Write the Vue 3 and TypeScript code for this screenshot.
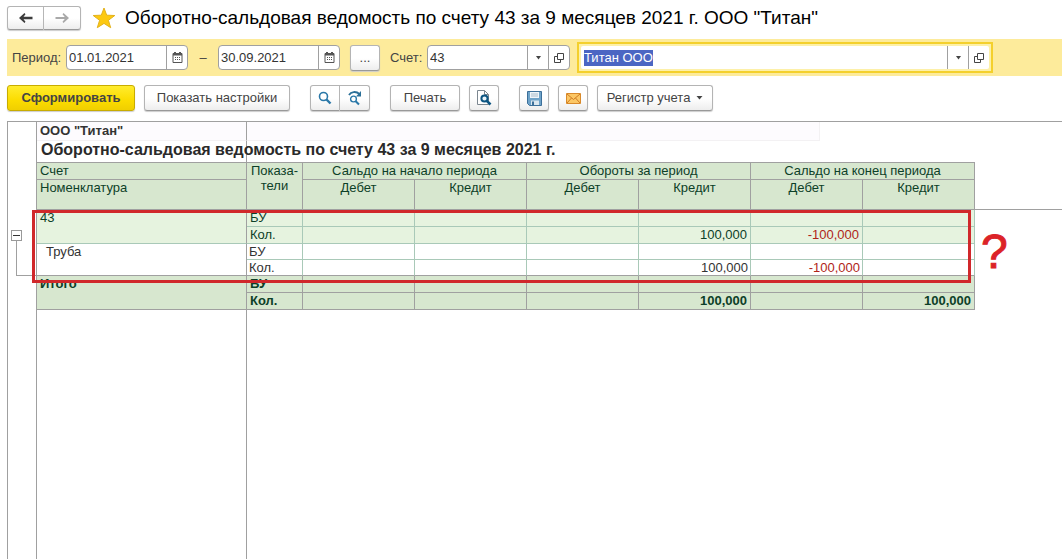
<script setup lang="ts">
import { onMounted, ref } from 'vue'

interface Line {
  kind: string
  name?: string
  indicator: string
  values: string[]
}

const dateFrom = ref('01.01.2021')
const dateTo = ref('30.09.2021')
const account = ref('43')
const company = ref('Титан ООО')
const companyInput = ref<HTMLInputElement | null>(null)

const groups = ['Сальдо на начало периода', 'Обороты за период', 'Сальдо на конец периода']
const sides = ['Дебет', 'Кредит', 'Дебет', 'Кредит', 'Дебет', 'Кредит']

const lines: Line[] = [
  { kind: 'account', name: '43', indicator: 'БУ', values: ['', '', '', '', '', ''] },
  { kind: 'account', indicator: 'Кол.', values: ['', '', '', '100,000', '-100,000', ''] },
  { kind: 'item', name: 'Труба', indicator: 'БУ', values: ['', '', '', '', '', ''] },
  { kind: 'item', indicator: 'Кол.', values: ['', '', '', '100,000', '-100,000', ''] },
  { kind: 'total', name: 'Итого', indicator: 'БУ', values: ['', '', '', '', '', ''] },
  { kind: 'total', indicator: 'Кол.', values: ['', '', '', '100,000', '', '100,000'] },
]

onMounted(() => {
  companyInput.value?.focus()
  companyInput.value?.select()
})
</script>

<template>
  <main class="page">
    <header class="head">
      <div class="group nav">
        <button class="btn" type="button" aria-label="Назад">
          <svg width="16" height="12" viewBox="0 0 16 12"><path d="M1 6 6.500 1 7.500 2.200 5.500 4.700H14.500V7.300H5.500L7.500 9.800 6.500 11Z" fill="#3c3c3c" /></svg>
        </button>
        <button class="btn" type="button" aria-label="Вперед">
          <svg width="16" height="12" viewBox="0 0 16 12"><path d="M15 6 9.500 1 8.500 2.200 10.800 5H1.500V7H10.800L8.500 9.800 9.500 11Z" fill="#a9a9a9" /></svg>
        </button>
      </div>
      <svg class="star" width="24" height="22" viewBox="0 0 24 22"><path d="M12 1 14.700 8.200 22.800 8.500 16.400 13.300 18.700 20.700 12 16.400 5.300 20.700 7.600 13.300 1.200 8.500 9.300 8.200Z" fill="#fdc911" stroke="#e3b21c" stroke-width="1" /></svg>
      <h1>Оборотно-сальдовая ведомость по счету 43 за 9 месяцев 2021 г. ООО "Титан"</h1>
    </header>

    <form class="filters" @submit.prevent>
      <label class="lbl-period" for="from">Период:</label>
      <div class="field date">
        <input id="from" v-model="dateFrom" type="text" />
        <button type="button" aria-label="Выбрать дату начала">
          <svg width="11" height="11" viewBox="0 0 11 11"><path d="M1 1.500H10V10.500H1Z" fill="#fff" stroke="#555" /><path d="M1 2.500H10M3 0V2M8 0V2" stroke="#555" stroke-width="2" /><path d="M3 5.500H9M3 7.500H9" stroke="#555" stroke-dasharray="1 1" /></svg>
        </button>
      </div>
      <span class="dash">–</span>
      <div class="field date">
        <input v-model="dateTo" type="text" aria-label="Конец периода" />
        <button type="button" aria-label="Выбрать дату окончания">
          <svg width="11" height="11" viewBox="0 0 11 11"><path d="M1 1.500H10V10.500H1Z" fill="#fff" stroke="#555" /><path d="M1 2.500H10M3 0V2M8 0V2" stroke="#555" stroke-width="2" /><path d="M3 5.500H9M3 7.500H9" stroke="#555" stroke-dasharray="1 1" /></svg>
        </button>
      </div>
      <button class="btn more" type="button">...</button>
      <label class="lbl-account" for="account">Счет:</label>
      <div class="field acc">
        <input id="account" v-model="account" type="text" />
        <button type="button" aria-label="Список счетов"><svg width="7" height="4" viewBox="0 0 7 4"><path d="M1 0H6L3.500 3.500Z" fill="#444" /></svg></button>
        <button type="button" aria-label="Открыть счет"><svg width="10" height="10" viewBox="0 0 10 10"><path d="M3.500 .5H9.500V6.500H3.500ZM3 3.500H.5V9.500H6.500V7" fill="none" stroke="#444" /></svg></button>
      </div>
      <div class="focus">
        <div class="field company">
          <input ref="companyInput" v-model="company" type="text" aria-label="Организация" />
          <button type="button" aria-label="Список организаций"><svg width="7" height="4" viewBox="0 0 7 4"><path d="M1 0H6L3.500 3.500Z" fill="#444" /></svg></button>
          <button type="button" aria-label="Открыть организацию"><svg width="10" height="10" viewBox="0 0 10 10"><path d="M3.500 .5H9.500V6.500H3.500ZM3 3.500H.5V9.500H6.500V7" fill="none" stroke="#444" /></svg></button>
        </div>
      </div>
    </form>

    <div class="tools">
      <button class="btn primary" type="button">Сформировать</button>
      <button class="btn settings" type="button">Показать настройки</button>
      <div class="group search">
        <button class="btn" type="button" aria-label="Найти">
          <svg width="14" height="14" viewBox="0 0 14 14"><circle cx="5.500" cy="5.500" r="4" fill="#fff" stroke="#2a78a8" stroke-width="1.600" /><path d="M8.500 8.500 12.500 12.500" stroke="#2a78a8" stroke-width="2.400" /></svg>
        </button>
        <button class="btn" type="button" aria-label="Найти далее">
          <svg width="16" height="16" viewBox="0 0 16 16"><path d="M2 5C4 1.500 9 1 12.500 4" fill="none" stroke="#2a6f98" stroke-width="1.800" /><path d="M14 1V6.500H9Z" fill="#2a6f98" /><circle cx="6.500" cy="9" r="2.900" fill="#fff" stroke="#2a78a8" stroke-width="1.400" /><path d="M8.700 11.200 12 14.500" stroke="#2a78a8" stroke-width="2" /></svg>
        </button>
      </div>
      <button class="btn print" type="button">Печать</button>
      <button class="btn icon preview" type="button" aria-label="Просмотр">
        <svg width="16" height="16" viewBox="0 0 16 16"><path d="M1.500 .5H8.500L12.500 4.500V14.500H1.500ZM8.500 .5V4.500H12.500" fill="#fff" stroke="#7c8790" /><circle cx="8.500" cy="8.500" r="3.100" fill="#e8f4fa" stroke="#0c5582" stroke-width="2" /><path d="M10.800 10.800 14.500 14.500" stroke="#0c5582" stroke-width="2.600" /></svg>
      </button>
      <button class="btn icon save" type="button" aria-label="Сохранить">
        <svg width="15" height="15" viewBox="0 0 15 15"><path d="M.5 .5H14.500V14.500H2.500L.5 12.500Z" fill="#6ea3c9" stroke="#3c6f99" /><path d="M3 1H12V7H3Z" fill="#eef5fa" /><path d="M4 3H11M4 5H11" stroke="#a9bccb" /><path d="M4 9.500H12V14H4Z" fill="#dbe7ef" /><path d="M5 10.500H7V14H5Z" fill="#3c6f99" /></svg>
      </button>
      <button class="btn icon" type="button" aria-label="Отправить по почте">
        <svg width="15" height="11" viewBox="0 0 15 11"><path d="M.5 .5H14.500V10.500H.5Z" fill="#fcc765" stroke="#d98a2b" /><path d="M1 1 7.500 6.500 14 1M1 10 5.500 5M14 10 9.500 5" fill="none" stroke="#cf7c24" /></svg>
      </button>
      <button class="btn register" type="button">Регистр учета <svg width="7" height="4" viewBox="0 0 7 4"><path d="M.5 0H6.500L3.500 3.500Z" fill="#444" /></svg></button>
    </div>

    <section class="sheet">
      <table>
        <colgroup>
          <col class="c-gutter" />
          <col class="c-name" />
          <col class="c-ind" />
          <col v-for="(s, i) in sides" :key="i" class="c-num" />
          <col />
        </colgroup>
        <tbody>
          <tr class="r-company">
            <td class="gutter"></td>
            <td class="name tint"><strong>ООО "Титан"</strong></td>
            <td class="free" colspan="8"><div class="strip"></div></td>
          </tr>
          <tr class="r-title">
            <td class="gutter"></td>
            <td class="name"><h2>Оборотно-сальдовая ведомость по счету 43 за 9 месяцев 2021 г.</h2></td>
            <td class="free under" colspan="7"></td>
            <td class="free"></td>
          </tr>
          <tr class="r-head">
            <td class="gutter"></td>
            <th class="name">Счет</th>
            <th rowspan="2">Показа-<br />тели</th>
            <th v-for="g in groups" :key="g" colspan="2">{{ g }}</th>
            <td class="free"></td>
          </tr>
          <tr class="r-sub">
            <td class="gutter under"></td>
            <th class="name">Номенклатура</th>
            <th v-for="(s, i) in sides" :key="i">{{ s }}</th>
            <td class="free under"></td>
          </tr>
          <tr v-for="(line, i) in lines" :key="i" :class="line.kind">
            <td v-if="i === 0" class="gutter tree" rowspan="4">
              <button type="button" aria-label="Свернуть группу"></button>
              <div class="branch"></div>
            </td>
            <td v-if="i > 3" class="gutter"></td>
            <td v-if="line.name" class="name" rowspan="2">{{ line.name }}</td>
            <td class="ind">{{ line.indicator }}</td>
            <td v-for="(v, k) in line.values" :key="k" class="num" :class="{ neg: v.startsWith('-') }">{{ v }}</td>
            <td class="free"></td>
          </tr>
        </tbody>
      </table>
      <div class="rest"><div></div><div></div></div>
      <div class="mark"></div>
      <div class="question">?</div>
    </section>
  </main>
</template>

<style>
body {
  margin: 0;
  background: #fff;
}
</style>

<style scoped>
.page {
  box-sizing: border-box;
  min-height: 100vh;
  padding-left: 7px;
  display: flex;
  flex-direction: column;
  overflow: hidden;
  font: 13px/16px "Liberation Sans", Arial, sans-serif;
  color: #444;
}
button,
input {
  box-sizing: border-box;
  font: inherit;
  color: inherit;
}
.head {
  display: flex;
  align-items: center;
  padding: 5px 0 9px;
}
h1 {
  margin: 0 0 0 9px;
  font-size: 19px;
  line-height: 25px;
  font-weight: 400;
  color: #000;
  white-space: nowrap;
}
.star {
  margin-left: 11px;
}
.btn {
  display: flex;
  align-items: center;
  justify-content: center;
  height: 26px;
  padding: 0;
  border: 1px solid #b4b4b4;
  border-bottom-color: #999;
  border-radius: 3px;
  background: linear-gradient(#fff 50%, #ededed);
  box-shadow: 0 1px 1px #ccc;
  white-space: nowrap;
}
.group {
  display: flex;
}
.group .btn:first-child {
  border-radius: 3px 0 0 3px;
}
.group .btn:last-child {
  border-left: 0;
  border-radius: 0 3px 3px 0;
}
.nav .btn {
  width: 37px;
  height: 24px;
}
.filters {
  display: flex;
  align-items: center;
  height: 37px;
  padding-left: 5px;
  background: #fdeb9b;
}
.lbl-period {
  width: 54px;
}
.lbl-account {
  width: 37px;
  margin-left: 10px;
}
.field {
  box-sizing: border-box;
  display: flex;
  height: 25px;
  border: 1px solid #a0a0a0;
  border-radius: 4px;
  background: #fff;
  overflow: hidden;
}
.field input {
  flex: 1;
  min-width: 0;
  padding: 0 2px;
  border: 0;
  outline: 0;
  background: none;
  color: #333;
}
.field input::selection {
  background: #4b66c3;
  color: #fff;
}
.field button {
  display: flex;
  align-items: center;
  justify-content: center;
  width: 21px;
  padding: 0;
  border: 0;
  border-left: 1px solid #a0a0a0;
  background: none;
}
.date {
  width: 122px;
}
.dash {
  width: 30px;
  text-align: center;
}
.more {
  width: 30px;
  margin-left: 10px;
}
.acc {
  width: 143px;
}
.focus {
  box-sizing: border-box;
  flex: 0 1 416px;
  margin-left: 7px;
  border: 2px solid #f4d02c;
  padding: 2px;
  background: #fdf0a8;
}
.company {
  border: 0;
  border-radius: 2px;
  height: 23px;
  padding-left: 1px;
}
.tools {
  display: flex;
  align-items: center;
  padding: 9px 0 10px;
}
.primary {
  width: 128px;
  border-color: #c8ac00;
  background: linear-gradient(#ffec2e, #fbdc00 60%, #f0cf00);
  font-weight: 700;
}
.settings {
  width: 146px;
  margin-left: 9px;
}
.search {
  margin: 0 20px;
}
.search .btn {
  width: 30px;
}
.print {
  width: 70px;
}
.icon {
  width: 30px;
  margin-left: 9px;
}
.save {
  margin-left: 20px;
}
.register {
  width: 116px;
  margin-left: 9px;
  gap: 6px;
}
.sheet {
  position: relative;
  flex: 1;
  display: flex;
  flex-direction: column;
  border-top: 1px solid #a0a0a0;
  border-left: 1px solid #a0a0a0;
}
table {
  width: 100%;
  table-layout: fixed;
  border-spacing: 0;
  line-height: 15px;
}
.c-gutter {
  width: 29px;
}
.c-name {
  width: 210px;
}
.c-ind {
  width: 56px;
}
.c-num {
  width: 112px;
}
td,
th {
  box-sizing: border-box;
  height: 17px;
  padding: 0;
  border: 0 solid #a0a0a0;
  border-width: 0 1px 1px 0;
  vertical-align: top;
  font-weight: 400;
  white-space: nowrap;
}
.name {
  padding-left: 3px;
  text-align: left;
}
.gutter {
  border-bottom: 0;
}
.free {
  border-width: 0;
}
.under {
  border-bottom-width: 1px;
}
.r-company td {
  height: 19px;
  color: #333;
}
.r-company .tint {
  background: #fdfbfe;
  border-bottom-color: #f3f1f3;
  line-height: 17px;
}
.strip {
  box-sizing: border-box;
  width: 573px;
  height: 19px;
  background: #fdfbfe;
  border: 1px solid #f3f1f3;
  border-width: 0 1px 1px 0;
}
.r-title td {
  height: 22px;
}
h2 {
  margin: 0;
  padding-left: 1px;
  font-size: 16px;
  line-height: 17px;
  color: #2a2a2a;
}
th {
  background: #d7e7cf;
  color: #0d4028;
}
.r-sub td,
.r-sub th {
  height: 30px;
}
.account td,
.item td {
  border-color: #a9c9b8;
}
.account .gutter,
.account .name,
.item .name {
  border-right-color: #a0a0a0;
}
.account td {
  background: #e6f3df;
  color: #0d4028;
}
.account .gutter,
.account .free {
  background: none;
}
.ind {
  padding-left: 3px;
}
.num {
  padding-right: 3px;
  text-align: right;
}
.item td {
  height: 16px;
  color: #333;
}
.item .name,
.item:nth-child(8) td {
  border-bottom-color: #a0a0a0;
}
.item .name {
  padding-left: 9px;
}
.item .ind {
  padding-left: 2px;
}
.item .num {
  padding-right: 2px;
}
.page .neg {
  color: #b02418;
}
.total td {
  background: #d7e7cf;
  color: #0d4028;
  font-weight: 700;
}
.total .gutter,
.total .free {
  background: none;
}
.tree button {
  display: block;
  width: 11px;
  height: 11px;
  margin: 20px 0 0 3px;
  padding: 0 1px;
  border: 1px solid #999;
  background: #fff;
}
.tree button::before {
  content: "";
  display: block;
  height: 1px;
  background: #333;
}
.branch {
  box-sizing: border-box;
  height: 35px;
  margin-left: 8px;
  border: 1px solid #a0a0a0;
  border-width: 0 0 1px 1px;
}
.rest {
  flex: 1;
  display: flex;
}
.rest div {
  box-sizing: border-box;
  width: 29px;
  border-right: 1px solid #a0a0a0;
}
.rest div + div {
  width: 210px;
}
.mark {
  position: absolute;
  box-sizing: border-box;
  left: 24px;
  top: 88px;
  width: 939px;
  height: 73px;
  border: 3px solid #d0282b;
}
.question {
  position: absolute;
  left: 973px;
  top: 106px;
  font-size: 48px;
  line-height: 48px;
  color: #dc2328;
  -webkit-text-stroke: 1px #dc2328;
}
</style>
